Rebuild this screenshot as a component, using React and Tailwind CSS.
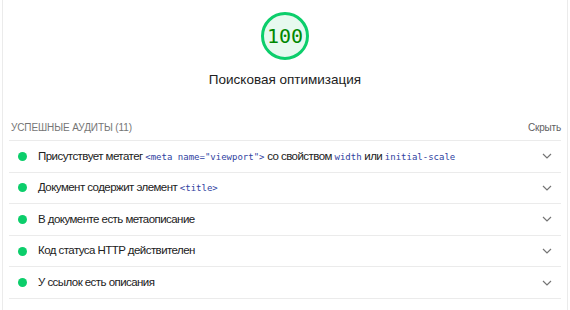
import React from 'react';

const AUDITS = [
  [
    'Присутствует метатег ',
    { code: '<meta name="viewport">' },
    ' со свойством ',
    { code: 'width' },
    ' или ',
    { code: 'initial-scale' },
  ],
  ['Документ содержит элемент ', { code: '<title>' }],
  ['В документе есть метаописание'],
  ['Код статуса HTTP действителен'],
  ['У ссылок есть описания'],
];

const MONO = { fontFamily: '"DejaVu Sans Mono", "Liberation Mono", monospace' };

const Chevron = () => (
  <svg width="10" height="6" viewBox="0 0 10 6" className="shrink-0">
    <path d="M1 1l4 4 4-4" fill="none" stroke="#757575" strokeWidth="1.2" />
  </svg>
);

export default function App() {
  return (
    <div
      className="w-[570px] h-[310px] bg-white overflow-hidden"
      style={{ fontFamily: '"Liberation Sans", Arial, sans-serif' }}
    >
      <div className="mx-[2px] h-full border-x border-[#ebebeb] px-[6px]">
        {/* Score gauge */}
        <div className="flex flex-col items-center pt-[12px]">
          <div className="w-[48px] h-[48px] rounded-full border-[3px] border-[#0cce6b] bg-[#e7f9ef] flex items-center justify-center">
            <span className="text-[20px] leading-none text-[#008800]" style={MONO}>
              100
            </span>
          </div>
          <div className="mt-[10px] text-[13.5px] leading-[20px] text-[#212121]">
            Поисковая оптимизация
          </div>
        </div>

        {/* Passed audits header */}
        <div className="mt-[27px] flex items-center justify-between h-[20px] pl-[2px]">
          <span className="text-[10px] uppercase text-[#757575] tracking-[-0.01em]">
            Успешные аудиты (11)
          </span>
          <span className="text-[10px] text-[#616161] tracking-[-0.02em]">Скрыть</span>
        </div>

        {/* Audit rows */}
        <div className="mt-[3px] border-t border-[#ebebeb]">
          {AUDITS.map((parts, i) => (
            <div
              key={i}
              className="h-[31.6px] flex items-center border-b border-[#ebebeb] pl-[9px] pr-[9px]"
            >
              <span className="w-[9px] h-[9px] rounded-full bg-[#0cce6b] shrink-0" />
              <div className="ml-[11px] flex-1 text-[11.5px] tracking-[-0.55px] text-[#212121] whitespace-nowrap">
                {parts.map((p, j) =>
                  typeof p === 'string' ? (
                    <span key={j}>{p}</span>
                  ) : (
                    <code key={j} className="text-[9px] tracking-normal text-[#303f9f]" style={MONO}>
                      {p.code}
                    </code>
                  )
                )}
              </div>
              <Chevron />
            </div>
          ))}
        </div>
      </div>
    </div>
  );
}
